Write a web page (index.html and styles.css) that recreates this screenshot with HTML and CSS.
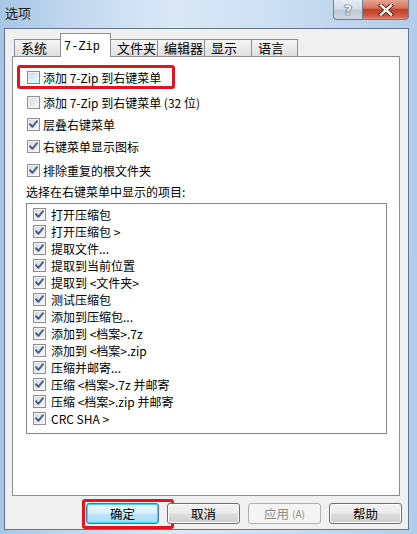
FILE: index.html
```html
<!DOCTYPE html>
<html lang="zh-CN">
<head>
<meta charset="utf-8">
<title>选项</title>
<link rel="stylesheet" href="styles.css">
</head>
<body>
<div class="window">
  <div class="titlebar">
    <span class="title">选项</span>
    <div class="caption">
      <div class="cap cap-help">?</div>
      <div class="cap cap-close">
        <svg width="16" height="12" viewBox="0 0 16 12">
          <path d="M3 1.5 L13 10.5 M13 1.5 L3 10.5" stroke="#5b1a12" stroke-width="4.2" stroke-linecap="square"/>
          <path d="M3 1.5 L13 10.5 M13 1.5 L3 10.5" stroke="#ffffff" stroke-width="2.4" stroke-linecap="square"/>
        </svg>
      </div>
    </div>
  </div>
  <div class="client">
    <div class="tabs">
      <div class="tab w46">系统</div>
      <div class="tab sel"><span class="mono">7-Zip</span></div>
      <div class="tab w47">文件夹</div>
      <div class="tab w47">编辑器</div>
      <div class="tab w47">显示</div>
      <div class="tab w46">语言</div>
    </div>
    <div class="panel">
      <div class="opt first">
        <span class="cb hover"></span>添加 7-Zip 到右键菜单
        <span class="mark mark-opt"></span>
      </div>
      <div class="opt gap3"><span class="cb"></span>添加 7-Zip 到右键菜单 (32 位)</div>
      <div class="opt"><span class="cb"><svg class="tick" viewBox="0 0 11 11"><path d="M2 5.2 L4.4 7.8 L9 2.2" /></svg></span>层叠右键菜单</div>
      <div class="opt"><span class="cb"><svg class="tick" viewBox="0 0 11 11"><path d="M2 5.2 L4.4 7.8 L9 2.2" /></svg></span>右键菜单显示图标</div>
      <div class="opt gap2"><span class="cb"><svg class="tick" viewBox="0 0 11 11"><path d="M2 5.2 L4.4 7.8 L9 2.2" /></svg></span>排除重复的根文件夹</div>
      <div class="opt-label">选择在右键菜单中显示的项目:</div>
      <div class="list">
        <div class="item"><span class="cb"><svg class="tick" viewBox="0 0 11 11"><path d="M2 5.2 L4.4 7.8 L9 2.2" /></svg></span>打开压缩包</div>
        <div class="item"><span class="cb"><svg class="tick" viewBox="0 0 11 11"><path d="M2 5.2 L4.4 7.8 L9 2.2" /></svg></span>打开压缩包 &gt;</div>
        <div class="item"><span class="cb"><svg class="tick" viewBox="0 0 11 11"><path d="M2 5.2 L4.4 7.8 L9 2.2" /></svg></span>提取文件...</div>
        <div class="item"><span class="cb"><svg class="tick" viewBox="0 0 11 11"><path d="M2 5.2 L4.4 7.8 L9 2.2" /></svg></span>提取到当前位置</div>
        <div class="item"><span class="cb"><svg class="tick" viewBox="0 0 11 11"><path d="M2 5.2 L4.4 7.8 L9 2.2" /></svg></span>提取到 &lt;文件夹&gt;</div>
        <div class="item"><span class="cb"><svg class="tick" viewBox="0 0 11 11"><path d="M2 5.2 L4.4 7.8 L9 2.2" /></svg></span>测试压缩包</div>
        <div class="item"><span class="cb"><svg class="tick" viewBox="0 0 11 11"><path d="M2 5.2 L4.4 7.8 L9 2.2" /></svg></span>添加到压缩包...</div>
        <div class="item"><span class="cb"><svg class="tick" viewBox="0 0 11 11"><path d="M2 5.2 L4.4 7.8 L9 2.2" /></svg></span>添加到 &lt;档案&gt;.7z</div>
        <div class="item"><span class="cb"><svg class="tick" viewBox="0 0 11 11"><path d="M2 5.2 L4.4 7.8 L9 2.2" /></svg></span>添加到 &lt;档案&gt;.zip</div>
        <div class="item"><span class="cb"><svg class="tick" viewBox="0 0 11 11"><path d="M2 5.2 L4.4 7.8 L9 2.2" /></svg></span>压缩并邮寄...</div>
        <div class="item"><span class="cb"><svg class="tick" viewBox="0 0 11 11"><path d="M2 5.2 L4.4 7.8 L9 2.2" /></svg></span>压缩 &lt;档案&gt;.7z 并邮寄</div>
        <div class="item"><span class="cb"><svg class="tick" viewBox="0 0 11 11"><path d="M2 5.2 L4.4 7.8 L9 2.2" /></svg></span>压缩 &lt;档案&gt;.zip 并邮寄</div>
        <div class="item"><span class="cb"><svg class="tick" viewBox="0 0 11 11"><path d="M2 5.2 L4.4 7.8 L9 2.2" /></svg></span>CRC SHA &gt;</div>
      </div>
    </div>
    <div class="buttons">
      <div class="btn default">确定<span class="mark mark-btn"></span></div>
      <div class="btn">取消</div>
      <div class="btn disabled">应用<span class="acc">(A)</span></div>
      <div class="btn">帮助</div>
    </div>
  </div>
</div>
</body>
</html>
```

FILE: styles.css
```css
* { box-sizing: border-box; margin: 0; padding: 0; }

html, body { width: 417px; height: 534px; overflow: hidden; }

body {
  font-family: "Noto Sans CJK SC", "Noto Sans", sans-serif;
  font-size: 12px;
  color: #000;
  background: linear-gradient(90deg, #a7c6e6 0%, #c3d8ee 18%, #dae8f6 42%, #cfe0f2 62%, #c0d6ed 82%, #b2cdea 100%);
}

.window {
  width: 417px;
  height: 534px;
  display: flex;
  flex-direction: column;
  padding: 0 8px 4px 4px;
}

/* title bar */
.titlebar {
  height: 28px;
  display: flex;
  align-items: flex-start;
}
.title {
  padding: 5px 0 0 1px;
  font-size: 13px;
  line-height: 16px;
  color: #1a1a1a;
}
.caption {
  margin-left: auto;
  display: flex;
}
.cap {
  height: 20px;
  border: 1px solid #6f7f94;
  border-top: none;
  display: flex;
  align-items: center;
  justify-content: center;
}
.cap-help {
  width: 29px;
  border-right: none;
  border-radius: 0 0 0 4px;
  background: linear-gradient(180deg, #e9eef5 0%, #d3dce8 45%, #bfcad9 55%, #cdd7e4 100%);
  font-family: "DejaVu Sans", sans-serif;
  font-size: 14px;
  font-weight: bold;
  color: #f4f6f9;
  text-shadow: 0 0 1px #3b4658, 0 0 1px #3b4658, 0 0 1px #3b4658;
}
.cap-close {
  width: 47px;
  border-radius: 0 0 4px 0;
  background: linear-gradient(180deg, #e8a291 0%, #d8765f 40%, #c0402a 52%, #d05e47 85%, #e08a6f 100%);
}

/* client area */
.client {
  flex: 1;
  border: 1px solid #63758e;
  background: #f0f0f0;
  display: flex;
  flex-direction: column;
}

.tabs {
  height: 27px;
  display: flex;
  align-items: flex-end;
  padding-left: 9px;
  position: relative;
  z-index: 1;
}
.tab {
  height: 17px;
  border: 1px solid #8c8e94;
  border-bottom: none;
  margin-right: -1px;
  background: linear-gradient(180deg, #f6f6f6 0%, #ebebeb 50%, #dedede 100%);
  padding-left: 6px;
  font-size: 13px;
  line-height: 15px;
  white-space: nowrap;
}
.w46 { width: 47px; }
.w47 { width: 48px; }
.tab.sel {
  width: 51px;
  height: 24px;
  margin-bottom: -1px;
  background: #fff;
  padding: 3px 0 0 3px;
  border-radius: 1px 1px 0 0;
}
.mono {
  font-family: "Liberation Mono", monospace;
  font-size: 12px;
}

.panel {
  height: 440px;
  margin: 0 8px 0 7px;
  border: 1px solid #8c8e94;
  background: #fff;
  padding: 9px 0 0 13px;
}

.opt {
  position: relative;
  height: 22px;
  margin-left: 1px;
  display: flex;
  align-items: center;
  gap: 3px;
  white-space: nowrap;
}
.gap3 { margin-top: 3px; }
.gap2 { margin-top: 2px; }
.opt-label {
  height: 22px;
  line-height: 22px;
  white-space: nowrap;
}

.cb {
  width: 13px;
  height: 13px;
  flex: none;
  border: 1px solid #8e8f8f;
  background: linear-gradient(135deg, #d2d4d8 0%, #e6e7e9 45%, #f7f7f7 100%);
  box-shadow: inset 0 0 0 1px #f4f4f4;
  display: flex;
  align-items: center;
  justify-content: center;
}
.cb.hover {
  border-color: #6a8fb5;
  background: linear-gradient(135deg, #c5dcf2 0%, #dcebf8 50%, #eef6fd 100%);
  box-shadow: inset 0 0 0 1px #eaf3fc;
}
.tick {
  width: 11px;
  height: 11px;
}
.tick path {
  fill: none;
  stroke: #4a5d8e;
  stroke-width: 2;
  stroke-linecap: round;
  stroke-linejoin: round;
}

.list {
  width: 361px;
  height: 231px;
  border: 1px solid #828790;
  background: #fff;
  padding: 2px 0 0 6px;
}
.item {
  height: 17px;
  display: flex;
  align-items: center;
  gap: 5px;
  white-space: nowrap;
}

/* annotation marks */
.mark {
  position: absolute;
  border: 3px solid #e3141c;
  border-radius: 3px;
  pointer-events: none;
}
.mark-opt {
  left: -10px;
  top: -1px;
  width: 158px;
  height: 24px;
}
.mark-btn {
  left: -5px;
  top: -5px;
  width: 92px;
  height: 30px;
}

/* buttons */
.buttons {
  margin-top: 7px;
  display: flex;
  justify-content: flex-end;
  gap: 8px;
  padding-right: 6px;
}
.btn {
  position: relative;
  width: 73px;
  height: 21px;
  border: 1px solid #707070;
  border-radius: 3px;
  background: linear-gradient(180deg, #f2f2f2 0%, #ebebeb 48%, #dddddd 52%, #cfcfcf 100%);
  box-shadow: inset 0 0 0 1px #fbfbfb;
  display: flex;
  align-items: center;
  justify-content: center;
  font-size: 12.5px;
}
.btn.default {
  border-color: #3c7fb1;
  background: linear-gradient(180deg, #eaf6fd 0%, #d9f0fc 48%, #bee6fd 52%, #a7d9f5 100%);
  box-shadow: inset 0 0 0 1px #48d0f5;
}
.btn.disabled {
  border-color: #adb2b5;
  background: #f4f4f4;
  box-shadow: none;
  color: #8d8d8d;
}
.acc {
  font-size: 10px;
  margin-left: 3px;
}
```
